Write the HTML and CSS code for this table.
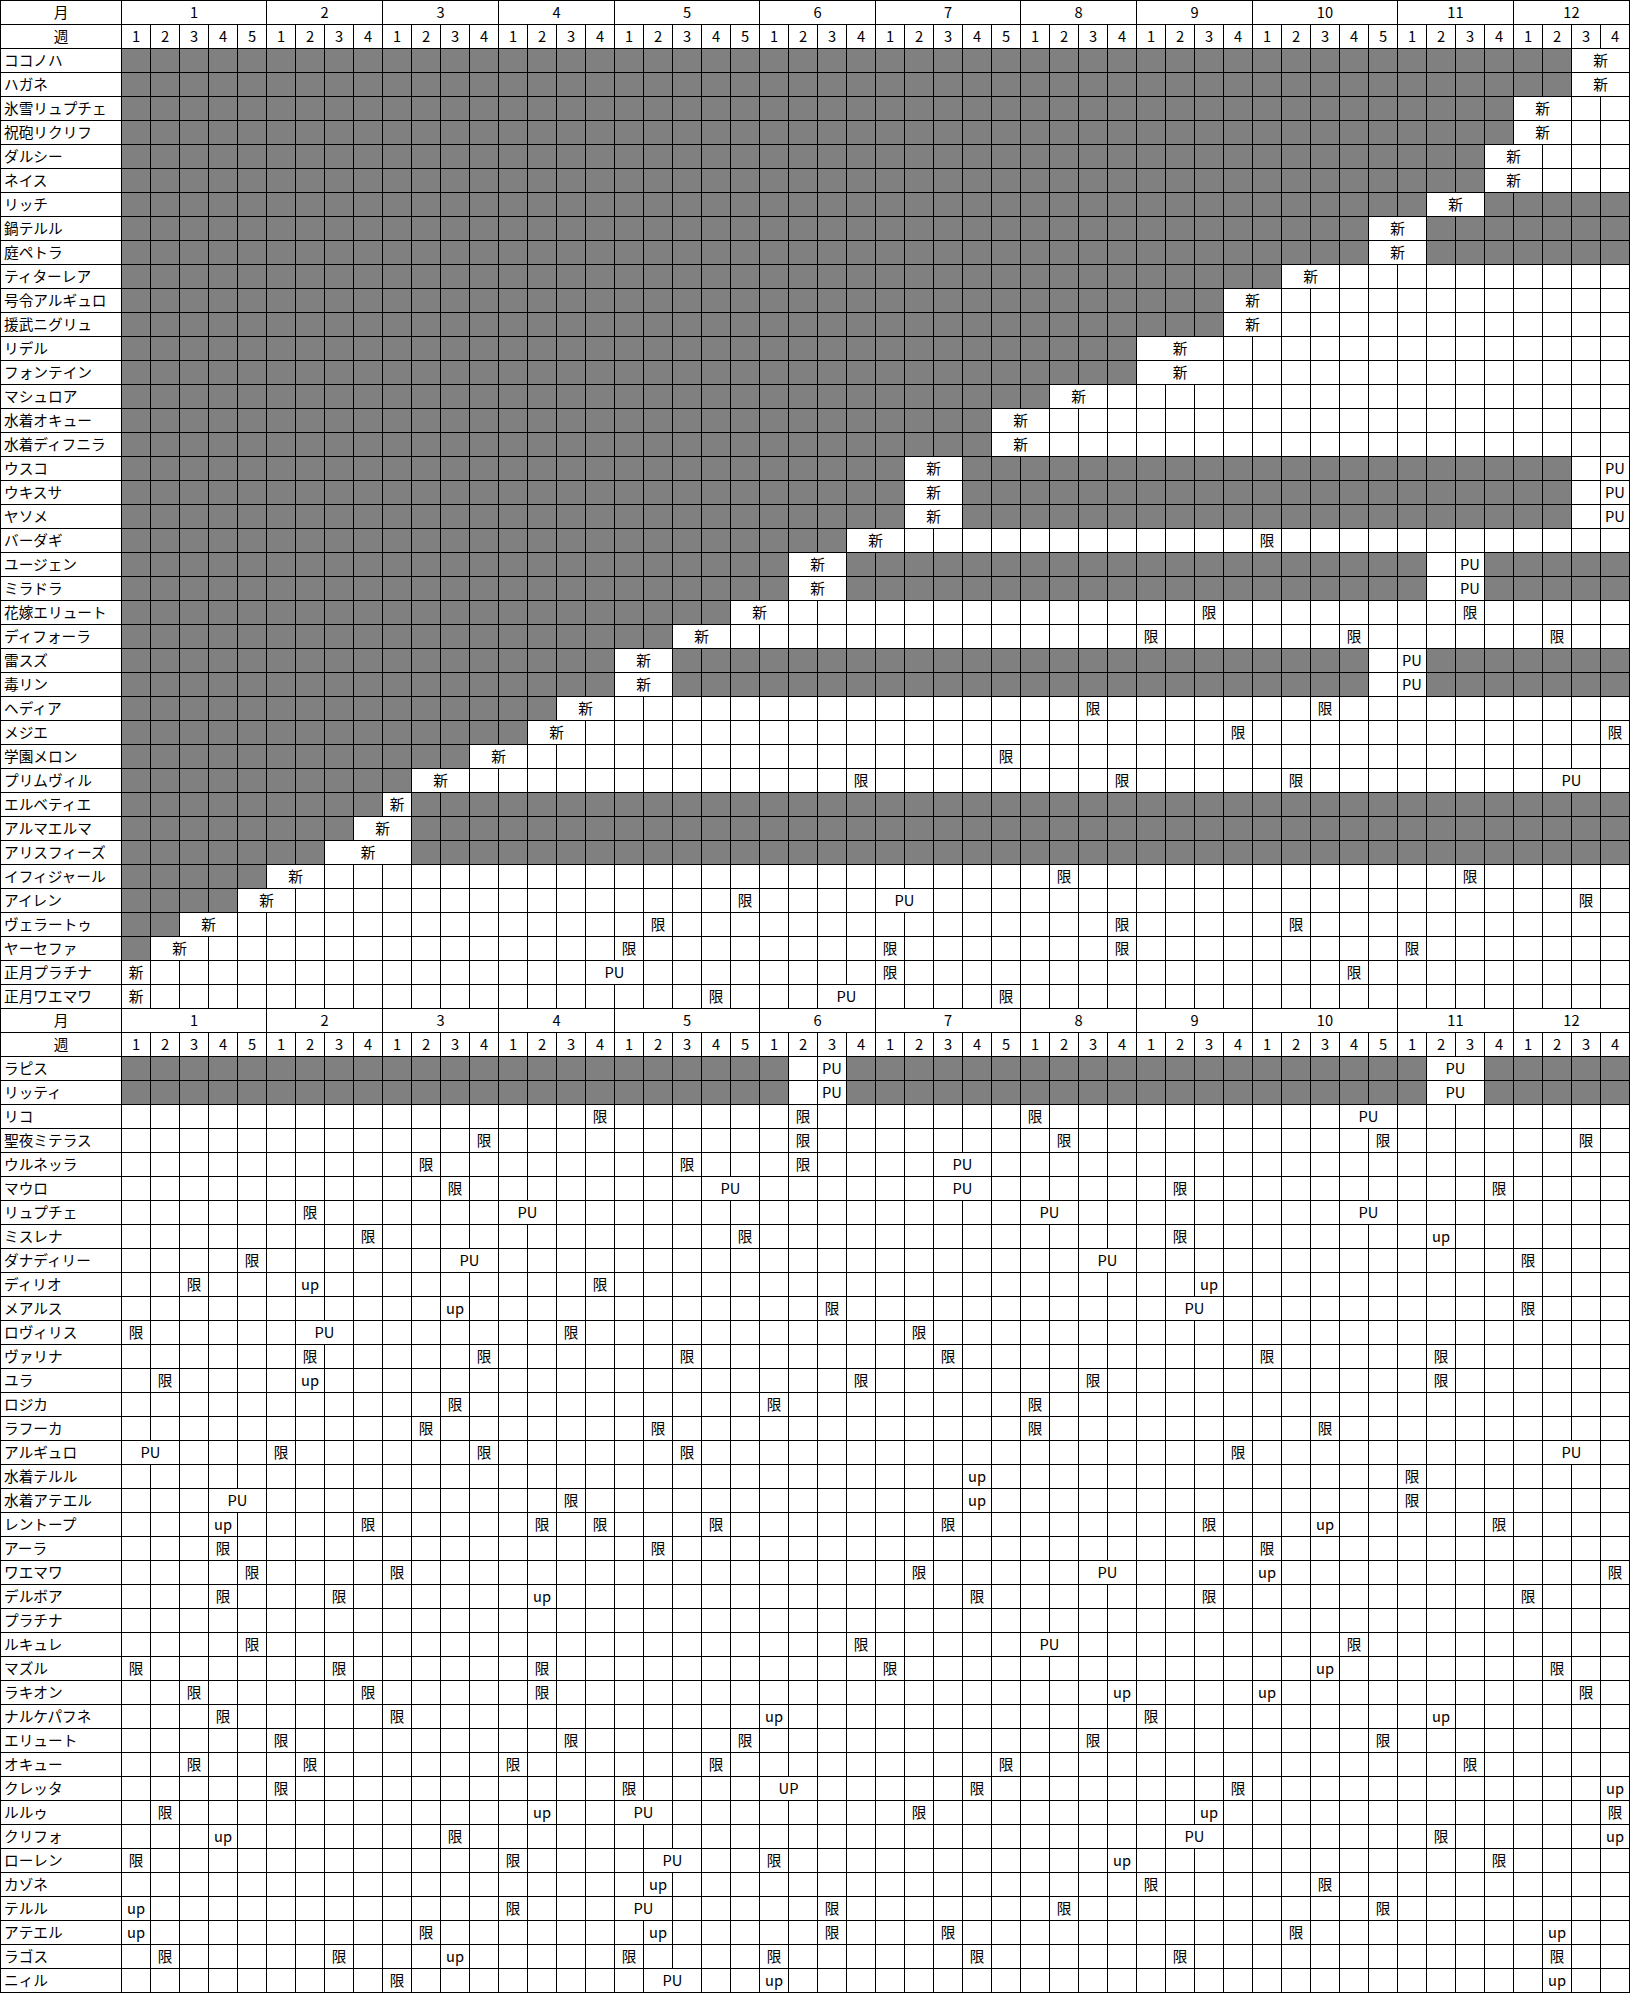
FILE: index.html
```html
<!DOCTYPE html>
<html lang="ja">
<head>
<meta charset="utf-8">
<title>スケジュール表</title>
<link rel="stylesheet" href="styles.css">
</head>
<body>
<div class="sheet" id="top"></div>
<div class="sheet sheet-next" id="bottom"></div>
<script src="app.js"></script>
</body>
</html>
```

FILE: styles.css
```css
html, body {
  margin: 0;
  padding: 0;
  background: #ffffff;
}
body {
  font-family: "Noto Sans CJK JP", "Noto Sans", "DejaVu Sans", sans-serif;
  font-size: 14.67px;
  color: #000000;
}
.sheet {
  display: grid;
  grid-template-columns: 120px repeat(52, 28px);
  grid-auto-rows: 23px;
  gap: 1px;
  padding: 1px;
  background: #000000;
  width: max-content;
}
.sheet-next {
  padding-top: 0;
}
.c {
  background: #ffffff;
  display: flex;
  align-items: center;
  justify-content: center;
  line-height: 1;
  white-space: nowrap;
  overflow: hidden;
}
.c.n {
  justify-content: flex-start;
  padding-left: 3px;
}
.c.g {
  background: #808080;
}
.s2 { grid-column: span 2; }
.s3 { grid-column: span 3; }
.s4 { grid-column: span 4; }
.s5 { grid-column: span 5; }
```

FILE: app.js
```js
(function () {
  var MONTHS = [5, 4, 4, 4, 5, 4, 5, 4, 4, 5, 4, 4];

  var TOP = [
    "ココノハ|0-49|50:新:2",
    "ハガネ|0-49|50:新:2",
    "氷雪リュプチェ|0-47|48:新:2",
    "祝砲リクリフ|0-47|48:新:2",
    "ダルシー|0-46|47:新:2",
    "ネイス|0-46|47:新:2",
    "リッチ|0-44,47-51|45:新:2",
    "鍋テルル|0-42,45-51|43:新:2",
    "庭ペトラ|0-42,45-51|43:新:2",
    "ティターレア|0-39|40:新:2",
    "号令アルギュロ|0-37|38:新:2",
    "援武ニグリュ|0-37|38:新:2",
    "リデル|0-34|35:新:3",
    "フォンテイン|0-34|35:新:3",
    "マシュロア|0-31|32:新:2",
    "水着オキュー|0-29|30:新:2",
    "水着ディフニラ|0-29|30:新:2",
    "ウスコ|0-26,29-49|27:新:2,51:PU",
    "ウキスサ|0-26,29-49|27:新:2,51:PU",
    "ヤソメ|0-26,29-49|27:新:2,51:PU",
    "バーダギ|0-24|25:新:2,39:限",
    "ユージェン|0-22,25-44,47-51|23:新:2,46:PU",
    "ミラドラ|0-22,25-44,47-51|23:新:2,46:PU",
    "花嫁エリュート|0-20|21:新:2,37:限,46:限",
    "ディフォーラ|0-18|19:新:2,35:限,42:限,49:限",
    "雷スズ|0-16,19-42,45-51|17:新:2,44:PU",
    "毒リン|0-16,19-42,45-51|17:新:2,44:PU",
    "ヘディア|0-14|15:新:2,33:限,41:限",
    "メジエ|0-13|14:新:2,38:限,51:限",
    "学園メロン|0-11|12:新:2,30:限",
    "プリムヴィル|0-9|10:新:2,25:限,34:限,40:限,49:PU:2",
    "エルベティエ|0-8,10-51|9:新",
    "アルマエルマ|0-7,10-51|8:新:2",
    "アリスフィーズ|0-6,10-51|7:新:3",
    "イフィジャール|0-4|5:新:2,32:限,46:限",
    "アイレン|0-3|4:新:2,21:限,26:PU:2,50:限",
    "ヴェラートゥ|0-1|2:新:2,18:限,34:限,40:限",
    "ヤーセファ|0-0|1:新:2,17:限,26:限,34:限,44:限",
    "正月プラチナ||0:新,16:PU:2,26:限,42:限",
    "正月ワエマワ||0:新,20:限,24:PU:2,30:限"
  ];

  var BOTTOM = [
    "ラピス|0-22,25-44,47-51|24:PU,45:PU:2",
    "リッティ|0-22,25-44,47-51|24:PU,45:PU:2",
    "リコ||16:限,23:限,31:限,42:PU:2",
    "聖夜ミテラス||12:限,23:限,32:限,43:限,50:限",
    "ウルネッラ||10:限,19:限,23:限,28:PU:2",
    "マウロ||11:限,20:PU:2,28:PU:2,36:限,47:限",
    "リュプチェ||6:限,13:PU:2,31:PU:2,42:PU:2",
    "ミスレナ||8:限,21:限,36:限,45:up",
    "ダナディリー||4:限,11:PU:2,33:PU:2,48:限",
    "ディリオ||2:限,6:up,16:限,37:up",
    "メアルス||11:up,24:限,36:PU:2,48:限",
    "ロヴィリス||0:限,6:PU:2,15:限,27:限",
    "ヴァリナ||6:限,12:限,19:限,28:限,39:限,45:限",
    "ユラ||1:限,6:up,25:限,33:限,45:限",
    "ロジカ||11:限,22:限,31:限",
    "ラフーカ||10:限,18:限,31:限,41:限",
    "アルギュロ||0:PU:2,5:限,12:限,19:限,38:限,49:PU:2",
    "水着テルル||29:up,44:限",
    "水着アテエル||3:PU:2,15:限,29:up,44:限",
    "レントープ||3:up,8:限,14:限,16:限,20:限,28:限,37:限,41:up,47:限",
    "アーラ||3:限,18:限,39:限",
    "ワエマワ||4:限,9:限,27:限,33:PU:2,39:up,51:限",
    "デルボア||3:限,7:限,14:up,29:限,37:限,48:限",
    "プラチナ||",
    "ルキュレ||4:限,25:限,31:PU:2,42:限",
    "マズル||0:限,7:限,14:限,26:限,41:up,49:限",
    "ラキオン||2:限,8:限,14:限,34:up,39:up,50:限",
    "ナルケパフネ||3:限,9:限,22:up,35:限,45:up",
    "エリュート||5:限,15:限,21:限,33:限,43:限",
    "オキュー||2:限,6:限,13:限,20:限,30:限,46:限",
    "クレッタ||5:限,17:限,22:UP:2,29:限,38:限,51:up",
    "ルルゥ||1:限,14:up,17:PU:2,27:限,37:up,51:限",
    "クリフォ||3:up,11:限,36:PU:2,45:限,51:up",
    "ローレン||0:限,13:限,18:PU:2,22:限,34:up,47:限",
    "カゾネ||18:up,35:限,41:限",
    "テルル||0:up,13:限,17:PU:2,24:限,32:限,43:限",
    "アテエル||0:up,10:限,18:up,24:限,28:限,40:限,49:up",
    "ラゴス||1:限,7:限,11:up,17:限,22:限,29:限,36:限,49:限",
    "ニィル||9:限,18:PU:2,22:up,49:up"
  ];

  function cell(parent, text, cls, span) {
    var d = document.createElement("div");
    d.className = "c" + (cls ? " " + cls : "") + (span > 1 ? " s" + span : "");
    if (text) d.textContent = text;
    parent.appendChild(d);
  }

  function header(parent) {
    cell(parent, "月", "", 1);
    for (var m = 0; m < MONTHS.length; m++) cell(parent, String(m + 1), "", MONTHS[m]);
    cell(parent, "週", "", 1);
    for (var k = 0; k < MONTHS.length; k++) {
      for (var w = 1; w <= MONTHS[k]; w++) cell(parent, String(w), "", 1);
    }
  }

  function row(parent, spec) {
    var parts = spec.split("|");
    var gray = [];
    var labels = {};
    if (parts[1]) {
      parts[1].split(",").forEach(function (r) {
        var ab = r.split("-");
        gray.push([+ab[0], +ab[1]]);
      });
    }
    if (parts[2]) {
      parts[2].split(",").forEach(function (l) {
        var p = l.split(":");
        labels[+p[0]] = { t: p[1], s: p[2] ? +p[2] : 1 };
      });
    }
    function isGray(c) {
      for (var i = 0; i < gray.length; i++) if (c >= gray[i][0] && c <= gray[i][1]) return true;
      return false;
    }
    cell(parent, parts[0], "n", 1);
    var c = 0;
    while (c < 52) {
      if (labels[c]) {
        cell(parent, labels[c].t, "", labels[c].s);
        c += labels[c].s;
      } else {
        cell(parent, "", isGray(c) ? "g" : "", 1);
        c += 1;
      }
    }
  }

  function build(id, rows) {
    var el = document.getElementById(id);
    header(el);
    rows.forEach(function (r) { row(el, r); });
  }

  build("top", TOP);
  build("bottom", BOTTOM);
})();
```
